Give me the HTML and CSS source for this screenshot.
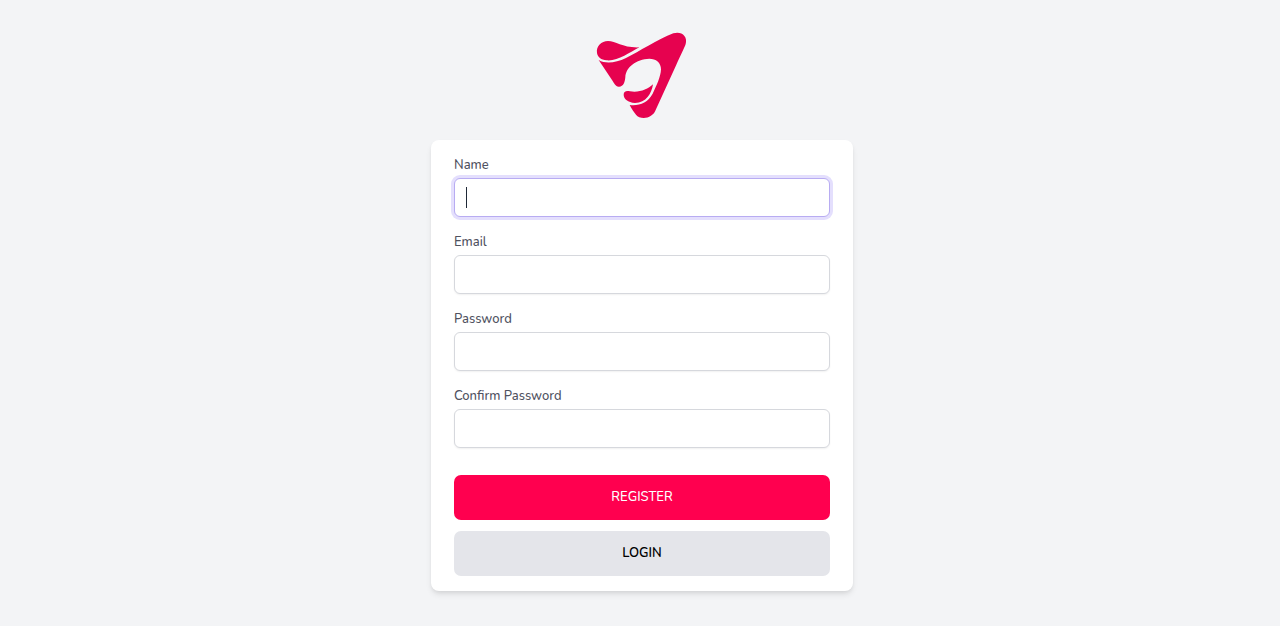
FILE: index.html
```html
<!DOCTYPE html>
<html lang="en">
<head>
  <meta charset="utf-8">
  <meta name="viewport" content="width=device-width, initial-scale=1">
  <title>Register</title>
  <link rel="stylesheet" href="styles.css">
</head>
<body class="page">
  <a class="logo" href="#" aria-label="Home">
    <svg class="logo-mark" viewBox="3 0 330 315" aria-hidden="true">
      <path d="M33 93C30 72 46 57 66 57C90 57 110 78 160 76C130 92 95 118 62 115C45 114 35 105 33 93Z"/>
      <path d="M38 114C60 127 90 122 120 108C160 88 215 53 262 34C285 26 306 42 299 66C295 78 284 100 271 128L210 262C200 292 162 294 150 278C143 270 137 260 131 249C160 252 185 243 200 215C212 190 224 165 225 142C225 122 210 110 190 110C150 112 120 135 118 165C117 180 112 195 98 194C88 193 85 184 78 174Z"/>
      <path d="M113 219C113 208 120 206 132 208C160 212 185 203 201 187C197 215 180 243 147 243C125 241 114 232 113 219Z"/>
    </svg>
  </a>
  <main class="card">
    <form class="form">
      <div class="field">
        <label class="label" for="name">Name</label>
        <div class="control">
          <input class="input input-active" id="name" type="text" autocomplete="name">
          <span class="caret"></span>
        </div>
      </div>
      <div class="field">
        <label class="label" for="email">Email</label>
        <input class="input" id="email" type="email">
      </div>
      <div class="field">
        <label class="label" for="password">Password</label>
        <input class="input" id="password" type="password">
      </div>
      <div class="field">
        <label class="label" for="confirm">Confirm Password</label>
        <input class="input" id="confirm" type="password">
      </div>
      <div class="actions">
        <button class="button button-primary" type="submit">REGISTER</button>
        <button class="button button-secondary" type="button">LOGIN</button>
      </div>
    </form>
  </main>
</body>
</html>
```

FILE: styles.css
```css
* {
  box-sizing: border-box;
}

.page {
  margin: 0;
  min-height: 100vh;
  padding: 22px 0 24px 4px;
  display: flex;
  flex-direction: column;
  align-items: center;
  background: #f3f4f6;
  font-family: Nunito, "Open Sans", sans-serif;
  font-size: 13px;
  font-weight: 500;
  line-height: 20px;
}

.logo-mark {
  display: block;
  width: 110px;
  height: 105px;
  fill: #e6024f;
}

.card {
  width: 100%;
  max-width: 422px;
  margin-top: 13px;
  padding: 15px 23px;
  border-radius: 8px;
  background: #fff;
  box-shadow: 0 4px 6px -1px rgba(0, 0, 0, 0.1), 0 2px 4px -1px rgba(0, 0, 0, 0.06);
}

.form {
  display: flex;
  flex-direction: column;
  gap: 15px;
}

.field {
  display: flex;
  flex-direction: column;
  gap: 3px;
}

.label {
  color: #50525f;
}

.control {
  position: relative;
}

.input {
  display: block;
  width: 100%;
  height: 39px;
  padding: 8px 11px;
  border: 1px solid #d6d8dd;
  border-radius: 6px;
  outline: none;
  background: #fff;
  box-shadow: 0 1px 2px rgba(0, 0, 0, 0.06);
  color: #111827;
  font: inherit;
}

.input-active,
.input:focus {
  border-color: #b8acf2;
  box-shadow: 0 0 0 3px #e4dffd;
}

.caret {
  position: absolute;
  top: 9px;
  left: 12px;
  width: 1px;
  height: 21px;
  background: #1f2937;
}

.control:focus-within .caret {
  display: none;
}

.actions {
  display: flex;
  flex-direction: column;
  gap: 11px;
  margin-top: 12px;
}

.button {
  height: 45px;
  padding: 0 16px 1px;
  border: 0;
  border-radius: 7px;
  font: inherit;
  cursor: pointer;
}

.button-primary {
  background: #ff004f;
  color: #fff;
}

.button-secondary {
  background: #e4e5ea;
  color: #000;
  font-weight: 600;
}
```
